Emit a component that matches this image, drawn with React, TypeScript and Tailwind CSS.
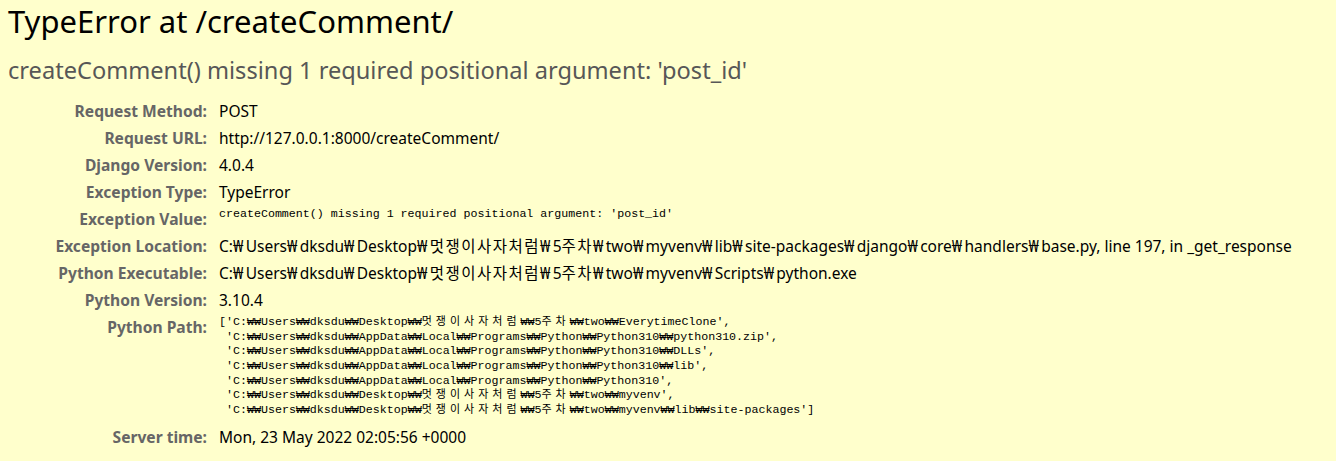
import React from 'react';

const sans = "font-['Noto_Sans','Noto_Sans_CJK_KR',sans-serif]";

const pythonPath = [
  "['C:₩₩Users₩₩dksdu₩₩Desktop₩₩멋쟁이사자처럼₩₩5주차₩₩two₩₩EverytimeClone',",
  " 'C:₩₩Users₩₩dksdu₩₩AppData₩₩Local₩₩Programs₩₩Python₩₩Python310₩₩python310.zip',",
  " 'C:₩₩Users₩₩dksdu₩₩AppData₩₩Local₩₩Programs₩₩Python₩₩Python310₩₩DLLs',",
  " 'C:₩₩Users₩₩dksdu₩₩AppData₩₩Local₩₩Programs₩₩Python₩₩Python310₩₩lib',",
  " 'C:₩₩Users₩₩dksdu₩₩AppData₩₩Local₩₩Programs₩₩Python₩₩Python310',",
  " 'C:₩₩Users₩₩dksdu₩₩Desktop₩₩멋쟁이사자처럼₩₩5주차₩₩two₩₩myvenv',",
  " 'C:₩₩Users₩₩dksdu₩₩Desktop₩₩멋쟁이사자처럼₩₩5주차₩₩two₩₩myvenv₩₩lib₩₩site-packages']",
];

// Windows font renders hangul and ₩ wider, pad them a little
const widen = (s: string, hangulCls: string, wonCls: string) =>
  s.split(/([가-힣]+|₩+)/).map((part, i) => {
    if (/^[가-힣]+$/.test(part)) return <span key={i} className={hangulCls}>{part}</span>;
    if (/^₩+$/.test(part)) return <span key={i} className={wonCls}>{part}</span>;
    return part;
  });

const Label: React.FC<{ children: React.ReactNode }> = ({ children }) => (
  <div className="text-right font-bold text-[#666666] text-[15.6px] leading-[27px] whitespace-nowrap">{children}</div>
);

const Value: React.FC<{ text: string }> = ({ text }) => (
  <div className="text-black text-[15.5px] leading-[27px] whitespace-nowrap">
    {widen(text, 'tracking-[1.5px]', 'tracking-[2.3px]')}
  </div>
);

const Mono: React.FC<{ text: string }> = ({ text }) => (
  <div className="font-['Liberation_Mono','DejaVu_Sans_Mono','Noto_Sans_CJK_KR',monospace] text-[11.65px] leading-[14.65px] text-black pt-px pb-[7px]">
    {text.split('\n').map((line, i) => (
      <div key={i} className="h-[14.65px] whitespace-pre">
        {widen(line, 'tracking-[4px] text-[11px]', '')}
      </div>
    ))}
  </div>
);

export default function App() {
  return (
    <div className={`min-h-screen w-full bg-[#ffffcc] ${sans} px-2 overflow-hidden`}>
      <h1 className="text-[31px] leading-[42px] font-normal text-black">TypeError at /createComment/</h1>
      <p className="text-[23.6px] leading-[32px] text-[#575757] mt-[12px]">
        createComment() missing 1 required positional argument: 'post_id'
      </p>
      <div className="grid grid-cols-[199px_1fr] gap-x-3 mt-[12px]">
        <Label>Request Method:</Label>
        <Value text="POST" />
        <Label>Request URL:</Label>
        <Value text="http://127.0.0.1:8000/createComment/" />
        <Label>Django Version:</Label>
        <Value text="4.0.4" />
        <Label>Exception Type:</Label>
        <Value text="TypeError" />
        <Label>Exception Value:</Label>
        <Mono text="createComment() missing 1 required positional argument: 'post_id'" />
        <Label>Exception Location:</Label>
        <Value text="C:₩Users₩dksdu₩Desktop₩멋쟁이사자처럼₩5주차₩two₩myvenv₩lib₩site-packages₩django₩core₩handlers₩base.py, line 197, in _get_response" />
        <Label>Python Executable:</Label>
        <Value text="C:₩Users₩dksdu₩Desktop₩멋쟁이사자처럼₩5주차₩two₩myvenv₩Scripts₩python.exe" />
        <Label>Python Version:</Label>
        <Value text="3.10.4" />
        <Label>Python Path:</Label>
        <Mono text={pythonPath.join('\n')} />
        <Label>Server time:</Label>
        <Value text="Mon, 23 May 2022 02:05:56 +0000" />
      </div>
    </div>
  );
}
